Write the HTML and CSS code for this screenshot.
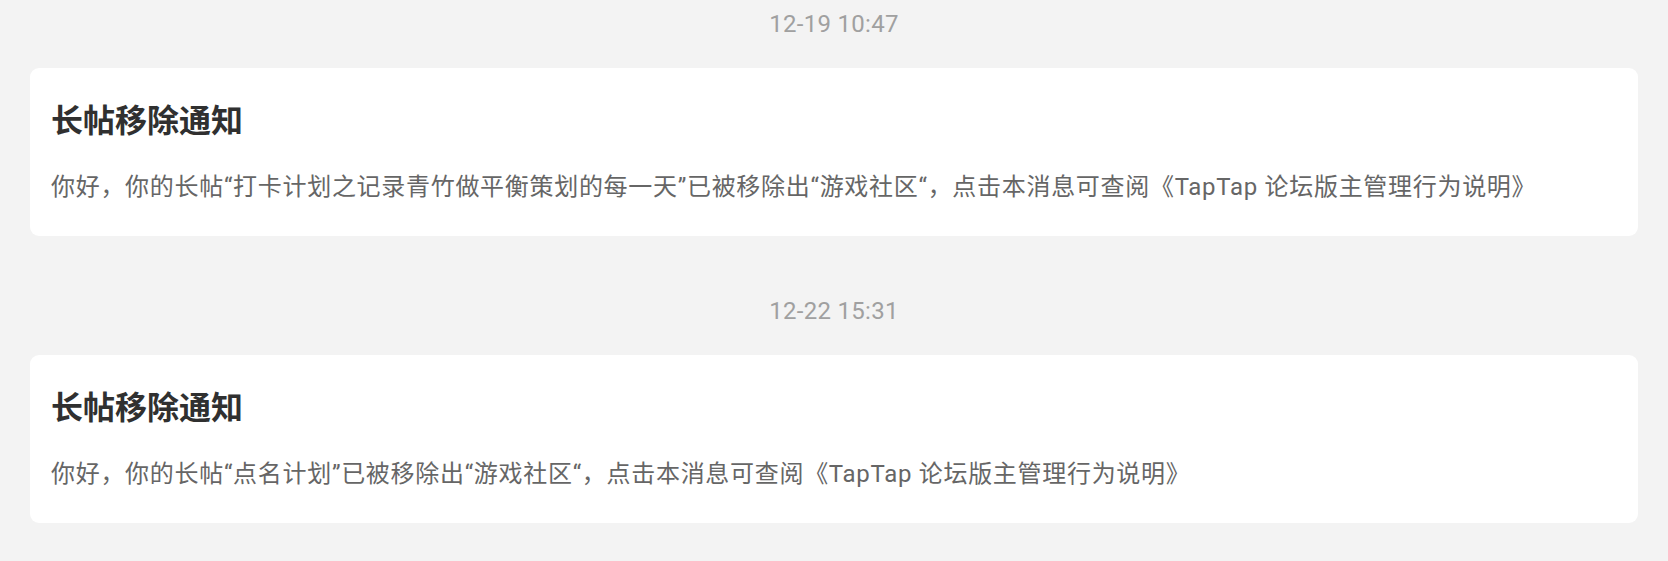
FILE: index.html
```html
<!DOCTYPE html>
<html lang="zh-CN">

<head>
  <meta charset="UTF-8">
  <title>消息通知</title>
  <link rel="stylesheet" href="styles.css">
</head>

<body>
  <div class="msgList">
    <div class="msg">
      <p class="time">12-19 10:47</p>
      <div class="card">
        <h3 class="title">长帖移除通知</h3>
        <p class="content">你好，你的长帖“打卡计划之记录青竹做平衡策划的每一天”已被移除出“游戏社区“，点击本消息可查阅《TapTap 论坛版主管理行为说明》</p>
      </div>
    </div>
    <div class="msg">
      <p class="time">12-22 15:31</p>
      <div class="card">
        <h3 class="title">长帖移除通知</h3>
        <p class="content">你好，你的长帖“点名计划”已被移除出“游戏社区“，点击本消息可查阅《TapTap 论坛版主管理行为说明》</p>
      </div>
    </div>
  </div>
</body>

</html>
```

FILE: styles.css
```css
* {
  margin: 0;
  padding: 0;
}

body {
  background-color: #f3f3f3;
  font-family: "Roboto", "Noto Sans CJK SC", sans-serif;
}

.msgList {
  display: flex;
  flex-direction: column;
  gap: 58px;
  padding: 7px 30px 0;
}

.msg .time {
  height: 34px;
  line-height: 34px;
  margin-bottom: 27px;
  text-align: center;
  font-size: 24px;
  letter-spacing: 0.3px;
  color: #a0a0a0;
}

.msg .card {
  height: 168px;
  box-sizing: border-box;
  padding: 28px 21px 0;
  border-radius: 9px;
  background-color: #fff;
}

.card .title {
  line-height: 44px;
  font-family: "Noto Sans CJK SC", sans-serif;
  font-size: 32px;
  font-weight: 700;
  color: #303030;
}

.card .content {
  margin-top: 29px;
  line-height: 36px;
  font-size: 24px;
  letter-spacing: 0.7px;
  color: #666;
  white-space: nowrap;
}
```
